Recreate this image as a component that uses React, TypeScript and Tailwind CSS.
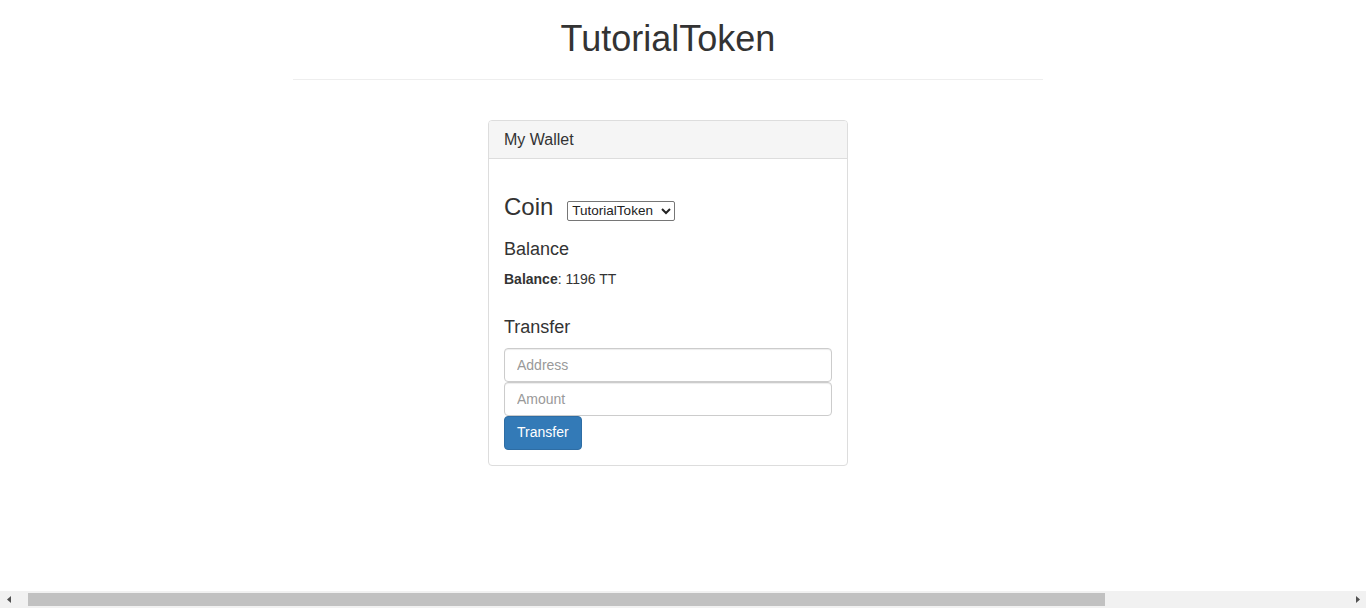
import { useState } from 'react'

const font = { fontFamily: '"Liberation Sans", Arial, sans-serif' }

function Scrollbar() {
  return (
    <div className="flex h-[17px] w-full items-center bg-[#f1f1f1]">
      <div className="flex h-[17px] w-[17px] items-center justify-center">
        <svg width="4" height="7" viewBox="0 0 4 7">
          <polygon points="4,0 4,7 0,3.5" fill="#505050" />
        </svg>
      </div>
      <div className="flex h-[17px] flex-1 items-center">
        <div className="ml-[11px] h-[13px] w-[1077px] bg-[#c1c1c1]"></div>
      </div>
      <div className="flex h-[17px] w-[17px] items-center justify-center">
        <svg width="4" height="7" viewBox="0 0 4 7">
          <polygon points="0,0 0,7 4,3.5" fill="#505050" />
        </svg>
      </div>
    </div>
  )
}

export default function App() {
  const [coin, setCoin] = useState('TutorialToken')
  const [address, setAddress] = useState('')
  const [amount, setAmount] = useState('')

  return (
    <div className="flex h-[608px] flex-col overflow-hidden bg-white text-[#333]" style={font}>
      <main className="flex-1 pl-[293px]">
        <div className="w-[750px]">
          <h1 className="mt-[19px] text-center text-[36px] leading-[40px] font-normal">TutorialToken</h1>
          <hr className="mt-[20px] border-t border-[#eee]" />

          <div className="mx-auto mt-[40px] w-[360px] rounded-[4px] border border-[#ddd] bg-white">
            <div className="h-[38px] rounded-t-[3px] border-b border-[#ddd] bg-[#f5f5f5] px-[15px] pt-[10px] text-[16px] leading-[18px]">
              My Wallet
            </div>
            <div className="px-[15px] pt-[35px] pb-[15px]">
              <div className="flex items-baseline text-[24px] leading-[26px]">
                <span>Coin</span>
                <select
                  value={coin}
                  onChange={(e) => setCoin(e.target.value)}
                  className="ml-[14px] h-[20px] w-[108px] rounded-[2px] border border-[#767676] bg-white text-[13.5px] text-[#222]"
                  style={font}
                >
                  <option value="TutorialToken">TutorialToken</option>
                </select>
              </div>

              <h4 className="mt-[18px] text-[18px] leading-[20px]">Balance</h4>
              <p className="mt-[10px] text-[14px] leading-[20px]">
                <strong>Balance</strong>: 1196 TT
              </p>

              <h4 className="mt-[28px] text-[18px] leading-[20px]">Transfer</h4>
              <div className="mt-[11px] flex flex-col">
                <input
                  value={address}
                  onChange={(e) => setAddress(e.target.value)}
                  placeholder="Address"
                  className="h-[34px] w-full rounded-[4px] border border-[#ccc] px-[12px] text-[14px] text-[#555] shadow-[inset_0_1px_1px_rgba(0,0,0,0.075)] outline-none placeholder:text-[#999]"
                  style={font}
                />
                <input
                  value={amount}
                  onChange={(e) => setAmount(e.target.value)}
                  placeholder="Amount"
                  className="h-[34px] w-full rounded-[4px] border border-[#ccc] px-[12px] text-[14px] text-[#555] shadow-[inset_0_1px_1px_rgba(0,0,0,0.075)] outline-none placeholder:text-[#999]"
                  style={font}
                />
                <div>
                  <button
                    className="h-[34px] rounded-[4px] border border-[#2e6da4] bg-[#337ab7] px-[12px] text-[14px] text-white"
                    style={font}
                  >
                    Transfer
                  </button>
                </div>
              </div>
            </div>
          </div>
        </div>
      </main>
      <Scrollbar />
    </div>
  )
}
